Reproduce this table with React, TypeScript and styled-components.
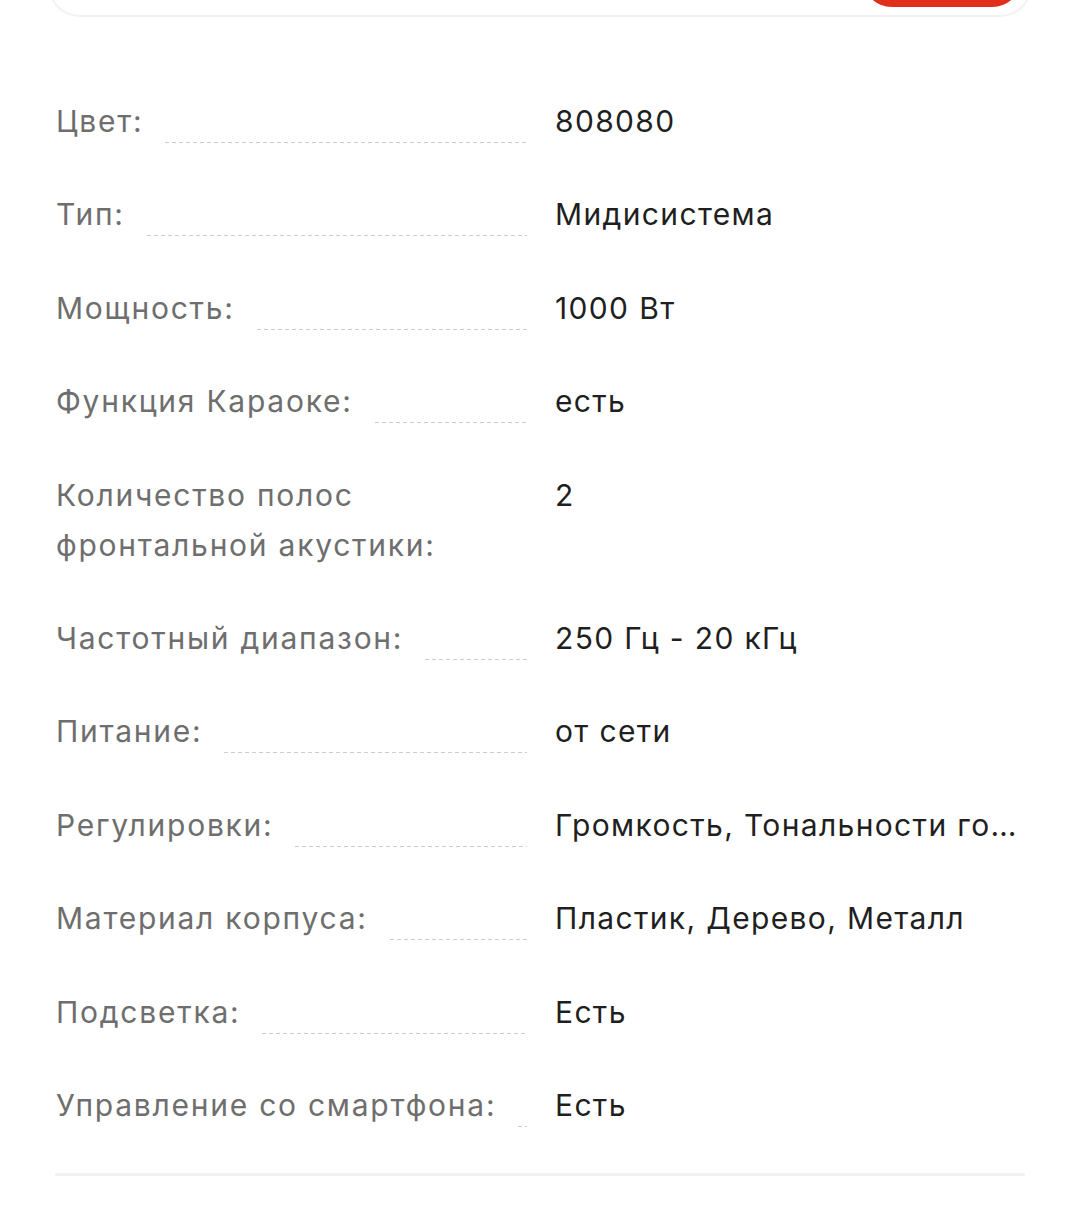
import React from "react";
import styled, { createGlobalStyle } from "styled-components";

// specs block: label + dotted leader on the left, value on the right

interface Spec {
  label: string;
  value: string;
}

const specs: Spec[] = [
  { label: "Цвет:", value: "808080" },
  { label: "Тип:", value: "Мидисистема" },
  { label: "Мощность:", value: "1000 Вт" },
  { label: "Функция Караоке:", value: "есть" },
  { label: "Количество полос фронтальной акустики:", value: "2" },
  { label: "Частотный диапазон:", value: "250 Гц - 20 кГц" },
  { label: "Питание:", value: "от сети" },
  { label: "Регулировки:", value: "Громкость, Тональности голоса, Эхо" },
  { label: "Материал корпуса:", value: "Пластик, Дерево, Металл" },
  { label: "Подсветка:", value: "Есть" },
  { label: "Управление со смартфона:", value: "Есть" },
];

const GlobalStyle = createGlobalStyle`
  html, body {
    margin: 0;
    padding: 0;
    background: #ffffff;
  }
  body {
    font-family: Inter, "Noto Sans", sans-serif;
    overflow: hidden;
  }
`;

const Page = styled.div`
  width: 1080px;
  height: 1216px;
  overflow: hidden;
  background: #ffffff;
`;

const TopCard = styled.div`
  height: 80px;
  margin: -63px 48px 0 48px;
  border: 2px solid #f2f2f2;
  border-top: none;
  border-radius: 0 0 32px 32px;
  display: flex;
  justify-content: flex-end;
  align-items: flex-end;
  padding: 0 8px 8px 0;
  box-sizing: border-box;
`;

const RedButton = styled.div`
  width: 160px;
  height: 60px;
  border-radius: 30px;
  background: #e0301b;
`;

const SpecList = styled.div`
  display: flex;
  flex-direction: column;
  gap: 43.4px;
  padding: 79px 55px 0 56px;
`;

const Row = styled.div`
  display: grid;
  grid-template-columns: 471px 1fr;
  column-gap: 28px;
  font-size: 30px;
  line-height: 50px;
`;

const LabelCell = styled.div`
  display: flex;
  min-width: 0;
`;

const Label = styled.span`
  color: #6e6e6e;
  flex: 0 1 auto;
  letter-spacing: 1.75px;
`;

const Leader = styled.span`
  flex: 1 1 auto;
  min-width: 0;
  margin-left: 22px;
  align-self: flex-end;
  margin-bottom: 3px;
  height: 1px;
  background-image: linear-gradient(to right, #cccccc 60%, transparent 60%);
  background-size: 7px 1px;
  background-repeat: repeat-x;
`;

const Value = styled.div`
  color: #1f1f1f;
  letter-spacing: 1.35px;
  white-space: nowrap;
  overflow: hidden;
  text-overflow: ellipsis;
  min-width: 0;
`;

const Divider = styled.div`
  height: 3px;
  background: #f1f1f1;
  margin-left: -1px;
`;

export default function App() {
  return (
    <Page>
      <GlobalStyle />
      <TopCard>
        <RedButton />
      </TopCard>
      <SpecList>
        {specs.map((s) => (
          <Row key={s.label}>
            <LabelCell>
              <Label>{s.label}</Label>
              <Leader />
            </LabelCell>
            <Value>{s.value}</Value>
          </Row>
        ))}
        <Divider />
      </SpecList>
    </Page>
  );
}
